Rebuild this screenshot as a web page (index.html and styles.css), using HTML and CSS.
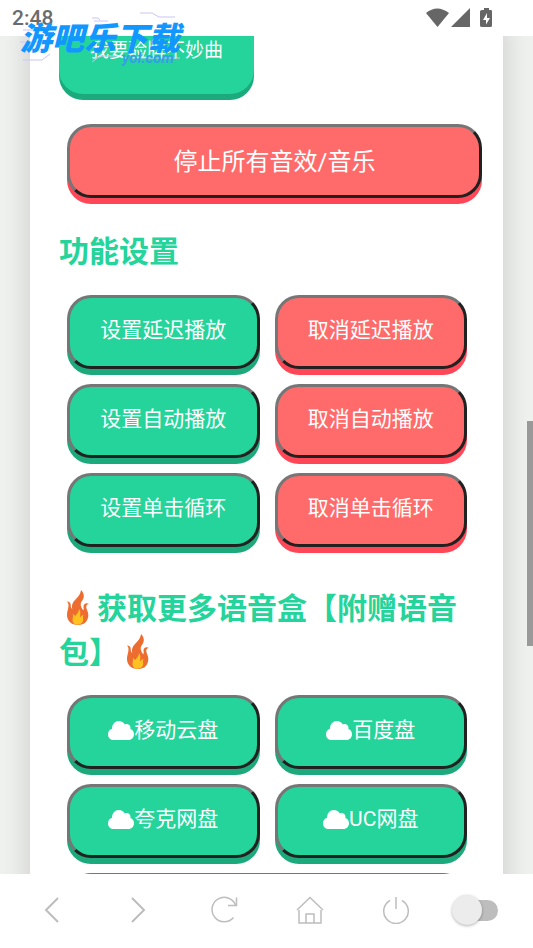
FILE: index.html
```html
<!DOCTYPE html>
<html lang="zh-CN">
<head>
<meta charset="utf-8">
<meta name="viewport" content="width=device-width, initial-scale=1">
<title>语音盒</title>
<link rel="stylesheet" href="styles.css">
</head>
<body>
<svg class="symbols" aria-hidden="true">
  <symbol id="cloud" viewBox="0 0 26 19">
    <path d="M6 19C2.500 19 0 16.600 0 13.400C0 10.700 1.700 8.600 4 7.800C3.900 3.200 7 0 10.800 0C13.600 0 15.700 1.300 16.800 3.400C20 2 23.200 4.500 22.400 7.900C24.700 8.700 26 10.700 26 13.200C26 16.500 23.600 19 20.400 19Z"/>
  </symbol>
  <symbol id="flame" viewBox="0 0 22 35">
    <path fill="#ed6c30" d="M14 0C13.500 4 11.500 6.500 9 9C6 12 4.300 14.800 5.300 19C4 18 3.600 16.500 3.700 15C3.700 13 2.300 11.500 0 11.600C2 13.500 1.700 16 1 19C.3 21.500 0 23 0 25C0 31 4.500 35 11 35C17.500 35 21.300 31 21.300 25C21.300 21 18.800 18.600 19.300 16.200C19.500 14.900 20.500 14 22 14C19.500 12.400 16.700 13.700 16.500 16.500C16.500 18 17 19.300 16.300 20.300C14.800 18.500 13.300 16.500 13.800 13.500C14.300 11 16.800 9.500 16.800 6C16.700 3.500 15.800 1.500 14 0Z"/>
    <path fill="#fdc220" d="M12 19C12 22 10 23.500 8.300 26C7.500 25.700 7 24.500 5.500 24.300C6.700 26 5.500 27.500 5.500 30C5.500 33 7.500 34.700 10.500 34.700C14 34.700 16.200 32.500 16.200 29.500C16.200 27.500 15.500 26.500 16.700 25.400C15 25.200 14.200 26 13.500 27.300C12.500 25.800 14.500 22 12 19Z"/>
  </symbol>
</svg>

<header class="status">
  <span class="time">2:48</span>
  <svg class="status-icons" viewBox="0 0 68 20" aria-hidden="true">
    <path d="M0 5Q11-4 23 5L11.500 19Z"/>
    <path d="M44 0V19H25Z"/>
    <path d="M58 0H63V2H65Q66 2 66 3.500V17.500Q66 19 64.500 19H56Q54 19 54 17.500V3.500Q54 2 56 2H58Z"/>
    <path class="bolt" d="M61 5L57 12H60V16.500L64 10H61Z"/>
  </svg>
  <div class="mark" aria-hidden="true">
    <svg class="circuit" viewBox="0 0 175 50">
      <path d="M72 6H78L80 8M120 1H132L139 5H155M74 9H88M3 18H22M0 30H20M3 48H22L30 42M72 50L80 44H98M112 46H160"/>
    </svg>
    <span class="mark-name">游吧乐下载</span>
    <span class="mark-site">yol.com</span>
  </div>
</header>

<main class="view">
  <section class="card">
    <button class="btn sound" type="button">我要验牌不妙曲</button>
    <button class="btn red stop" type="button">停止所有音效/音乐</button>

    <h2 class="title">功能设置</h2>
    <div class="grid">
      <button class="btn" type="button">设置延迟播放</button>
      <button class="btn red" type="button">取消延迟播放</button>
      <button class="btn" type="button">设置自动播放</button>
      <button class="btn red" type="button">取消自动播放</button>
      <button class="btn" type="button">设置单击循环</button>
      <button class="btn red" type="button">取消单击循环</button>
    </div>

    <h2 class="title more"><svg class="flame"><use href="#flame"/></svg>获取更多语音盒【附赠语音包】<svg class="flame"><use href="#flame"/></svg></h2>
    <div class="grid">
      <button class="btn" type="button"><svg class="cloud"><use href="#cloud"/></svg>移动云盘</button>
      <button class="btn" type="button"><svg class="cloud"><use href="#cloud"/></svg>百度盘</button>
      <button class="btn" type="button"><svg class="cloud"><use href="#cloud"/></svg>夸克网盘</button>
      <button class="btn" type="button"><svg class="cloud"><use href="#cloud"/></svg>UC网盘</button>
      <button class="btn wide" type="button" aria-label="更多"></button>
    </div>
  </section>
  <div class="scrollbar"></div>
</main>

<nav class="toolbar">
  <button type="button" aria-label="后退"><svg class="icon bold" viewBox="0 0 28 28"><path d="M20 2L8 14L20 26"/></svg></button>
  <button type="button" aria-label="前进"><svg class="icon bold" viewBox="0 0 28 28"><path d="M8 2L20 14L8 26"/></svg></button>
  <button type="button" aria-label="刷新"><svg class="icon" viewBox="0 0 28 28"><path d="M23.500 21.500A12.200 12.200 0 1 1 25.500 9M26.500 1.500V9.500H18"/></svg></button>
  <button type="button" aria-label="主页"><svg class="icon" viewBox="0 0 28 28"><path d="M1 14L14 1.500L27 14M3 14V27H25V14M10 27V18H18V27"/></svg></button>
  <button type="button" aria-label="电源"><svg class="icon" viewBox="0 0 28 28"><path d="M8 4.500A12.300 12.300 0 1 0 20 4.500M14 1V13"/></svg></button>
  <input class="toggle" type="checkbox" aria-label="开关">
</nav>
</body>
</html>
```

FILE: styles.css
```css
* {
  box-sizing: border-box;
}

body {
  margin: 0;
  height: 100vh;
  display: flex;
  flex-direction: column;
  overflow: hidden;
  background: #fff;
  font-family: Roboto, "Noto Sans CJK SC", sans-serif;
}

button {
  font: inherit;
  padding: 0;
}

.symbols {
  position: absolute;
  width: 0;
  height: 0;
}

.status {
  position: relative;
  flex: none;
  height: 36px;
  display: flex;
  align-items: center;
  justify-content: space-between;
  padding: 0 39px 0 12px;
  color: #6b6b6b;
  font-size: 21px;
  font-weight: 500;
}

.status-icons {
  width: 68px;
  height: 20px;
  fill: #666;
}

.status-icons .bolt {
  fill: #fff;
}

/* Site mark laid over the status bar and the page */
.mark {
  position: absolute;
  z-index: 2;
  top: 12px;
  left: 20px;
  width: 175px;
  height: 50px;
  font-style: italic;
  font-weight: 700;
  white-space: nowrap;
  color: #1296ff;
}

.mark-name {
  position: absolute;
  top: 4px;
  left: 0;
  font-size: 32px;
  font-weight: 900;
  line-height: 46px;
}

.mark-site {
  position: absolute;
  top: 38px;
  left: 102px;
  font-size: 15px;
  line-height: 16px;
  color: #339fe8;
}

.circuit {
  position: absolute;
  inset: 0;
  fill: none;
  stroke: #c9c6f4;
}

.view {
  position: relative;
  flex: 1;
  min-height: 0;
  overflow: hidden;
  background: #f0f2ef;
}

.card {
  margin: -26px 30px 0;
  padding: 0 29px;
  background: #fff;
  box-shadow: 0 8px 30px rgba(0, 0, 0, 0.17);
}

.btn {
  display: flex;
  align-items: center;
  justify-content: center;
  height: 74px;
  padding-bottom: 8px;
  border: 3px solid;
  border-color: #767676 #212121 #212121 #767676;
  border-radius: 24px;
  background: #24d49a;
  box-shadow: 0 6px 0 #1ca97b;
  color: #fff;
  font-size: 21px;
}

.btn.red {
  background: #ff6b6b;
  box-shadow: 0 6px 0 #ff4757;
}

.btn.sound {
  width: 195px;
  height: 84px;
  border: 0;
  font-size: 19px;
}

.btn.stop {
  width: 100%;
  margin: 30px 0 32px 8px;
  padding-bottom: 4px;
  font-size: 24px;
}

.title {
  margin: 0;
  color: #24d49a;
  font-size: 30px;
  line-height: 44px;
  font-weight: 700;
}

.title.more {
  margin-top: 40px;
}

.flame {
  width: 22px;
  height: 35px;
  margin: 0 8px;
  vertical-align: -6px;
}

.grid {
  display: grid;
  grid-template-columns: 1fr 1fr;
  gap: 15px;
  margin: 21px 7px 0 8px;
}

.title.more + .grid {
  margin-top: 20px;
}

.wide {
  grid-column: span 2;
}

.cloud {
  width: 26px;
  height: 19px;
  margin-top: 4px;
  fill: #fff;
}

.scrollbar {
  position: absolute;
  top: 46%;
  right: 0;
  width: 6px;
  height: 225px;
  background: #999;
}

.toolbar {
  flex: none;
  height: 74px;
  display: grid;
  grid-template-columns: repeat(6, 1fr);
  align-items: center;
  justify-items: center;
  padding: 0 8px 2px 9px;
  background: #fff;
}

.toolbar button {
  display: flex;
  border: 0;
  background: none;
}

.icon {
  width: 28px;
  height: 28px;
  fill: none;
  stroke: #bdbdbd;
  stroke-width: 1.5;
}

.icon.bold {
  stroke-width: 2;
}

.toggle {
  appearance: none;
  position: relative;
  width: 46px;
  height: 30px;
  margin: 0 14px 0 0;
}

.toggle::before {
  content: "";
  position: absolute;
  inset: 5px 0 4px 12px;
  border-radius: 11px;
  background: #bdbdbd;
}

.toggle::after {
  content: "";
  position: absolute;
  inset: 0 auto 0 0;
  width: 30px;
  border-radius: 50%;
  background: #ececec;
  box-shadow: 0 1px 3px rgba(0, 0, 0, 0.3);
}
```
